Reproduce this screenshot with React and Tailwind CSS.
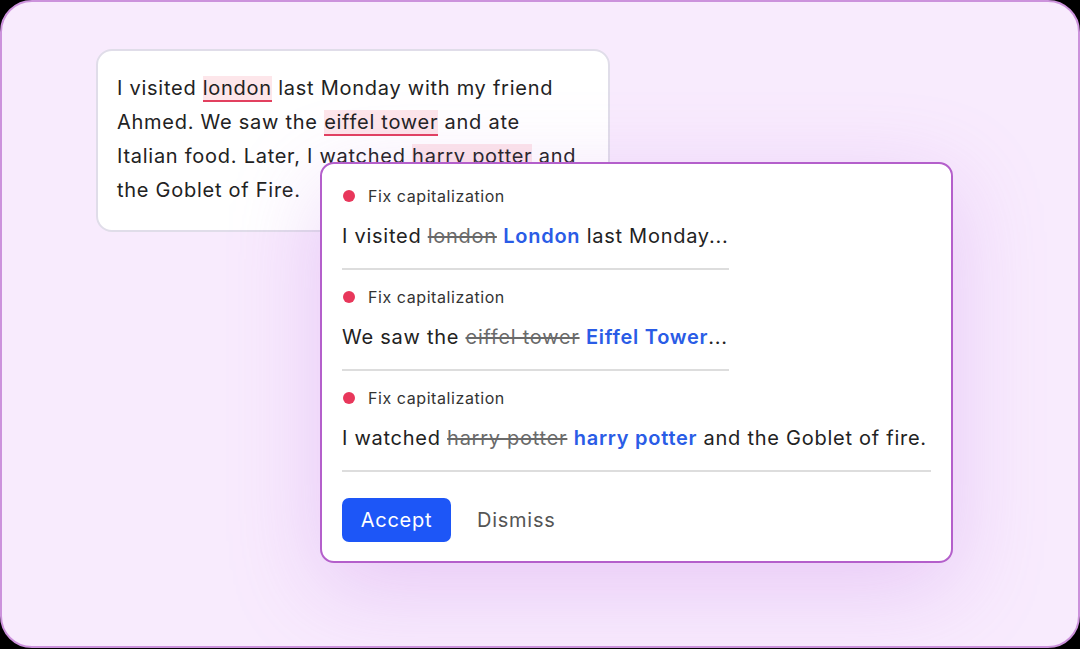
import React from "react";

function Hl({ children }) {
  return (
    <span className="bg-[#fde6ea] border-b-2 border-[#e2405f]">{children}</span>
  );
}

function Group({ children, full }) {
  return (
    <div>
      <div className="flex items-center h-6">
        <span className="w-3 h-3 rounded-full bg-[#e8375b] mr-[13px] ml-[1px]" />
        <span className="text-[16px] leading-6 text-[#333] tracking-[0.036em]">Fix capitalization</span>
      </div>
      <div className="mt-[14px] text-[20px] leading-7 text-[#222] whitespace-nowrap">{children}</div>
      <div className={`mt-[18px] h-[2px] bg-[#dddddd] ${full ? "w-full" : "w-[387px]"}`} />
    </div>
  );
}

function Old({ children }) {
  return <span className="line-through text-[#6a6a6a]">{children}</span>;
}
function New({ children }) {
  return <span className="font-semibold text-[#2a5ce6]">{children}</span>;
}

export default function App() {
  return (
    <div
      className="w-[1080px] h-[649px] bg-black overflow-hidden tracking-[0.046em]"
      style={{ fontFamily: "Inter, 'Noto Sans', sans-serif" }}
    >
      <div className="relative w-[1080px] h-[648px] rounded-[32px] border-2 border-[#cc92dc] bg-[#f8ebfd] overflow-hidden">
        <div className="absolute left-[94px] top-[47px] w-[514px] rounded-[16px] border-2 border-[#e0dde9] bg-white pl-[19px] pr-[24px] pt-[20px] pb-[23px] text-[20px] leading-[34px] text-[#222]">
          I visited <Hl>london</Hl> last Monday with my friend Ahmed. We saw the{" "}
          <Hl>eiffel tower</Hl> and ate Italian food. Later, I watched{" "}
          <Hl>harry potter</Hl> and the Goblet of Fire.
        </div>

        <div className="absolute left-[318px] top-[160px] w-[633px] rounded-[14px] border-2 border-[#b45fcb] bg-white pl-[20px] pr-[20px] pt-[20px] pb-[19px] shadow-[0_24px_90px_rgba(190,110,230,0.28)]">
          <div className="flex flex-col gap-[15px]">
            <Group>
              I visited <Old>london</Old> <New>London</New> last Monday...
            </Group>
            <Group>
              We saw the <Old>eiffel tower</Old> <New>Eiffel Tower</New>...
            </Group>
            <Group full>
              I watched <Old>harry potter</Old> <New>harry potter</New> and the Goblet of fire.
            </Group>
          </div>
          <div className="mt-[26px] flex items-center">
            <button className="h-[44px] w-[109px] rounded-[7px] bg-[#1d56f7] text-white text-[20px] tracking-[0.036em]">
              Accept
            </button>
            <span className="ml-[26px] text-[20px] text-[#555]">Dismiss</span>
          </div>
        </div>
      </div>
    </div>
  );
}
